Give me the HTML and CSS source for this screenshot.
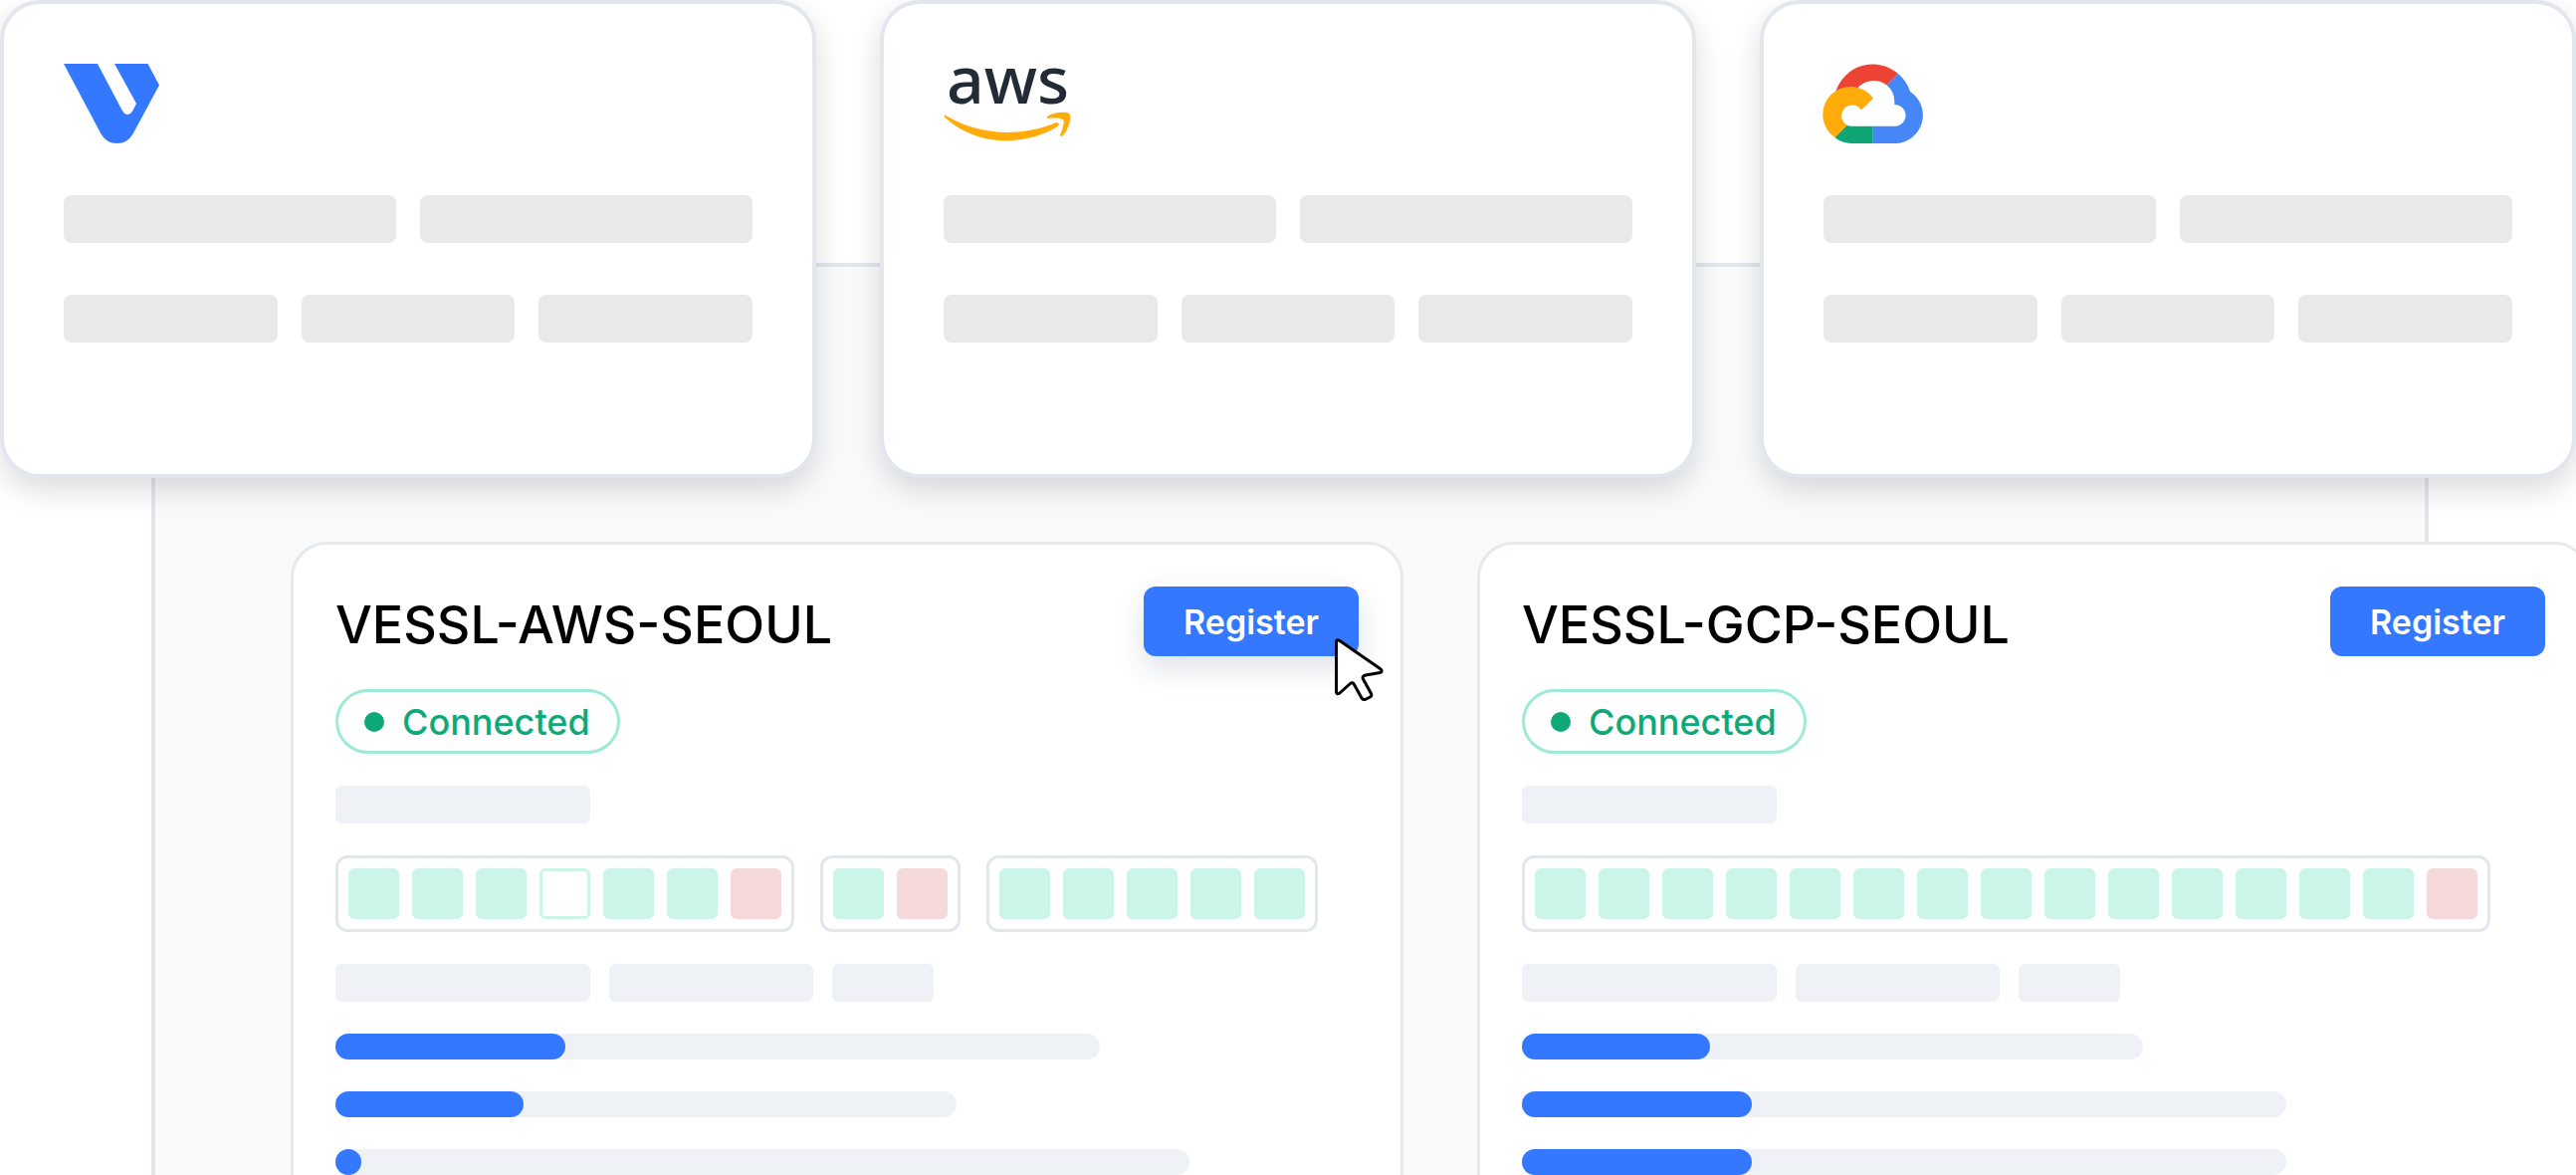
FILE: index.html
```html
<!DOCTYPE html>
<html lang="en">

<head>
    <title>VESSL Clusters</title>
    <meta charset="utf-8">
    <meta name="viewport" content="width=device-width, initial-scale=1.0">
    <link rel="stylesheet" href="styles.css">
</head>

<body>
    <div class="providers">
        <div class="provider-card">
            <svg class="logo" width="96" height="80" viewBox="0 0 96 80" role="img" aria-label="VESSL">
                <path fill="#3378FF" d="M0 0H34L58 45.500Q61 51 64 51Q67.500 51 70 46L73 40L51 0H84.500L96 21.500L69.500 70.500Q64 80 53.500 80Q43 80 37.500 70.500Z" />
            </svg>
            <div class="bar-row">
                <span class="bar"></span>
                <span class="bar"></span>
            </div>
            <div class="bar-row">
                <span class="bar"></span>
                <span class="bar"></span>
                <span class="bar"></span>
            </div>
        </div>

        <div class="provider-card">
            <svg class="logo" width="130" height="80" viewBox="0 0 130 80">
                <text class="aws-text" x="3" y="40">aws</text>
                <g fill="#FFAC0A">
                    <path d="M0.500 52.500Q1 51 3 52.500C36 72 78 74 113 59Q116 58.500 116 61Q116 62 113 64C80 83 33 83 2 54.500Q0 53 0.500 52.500Z" />
                    <path d="M104 54.500Q103 53.500 105 52.500C111 48.500 122 48 126.500 50C129 53 126 66 119.500 72.500Q117 73.500 117 71.500C119 67 121.500 59.500 120.500 57C118.500 54 109 54.500 105 55Z" />
                </g>
            </svg>
            <div class="bar-row">
                <span class="bar"></span>
                <span class="bar"></span>
            </div>
            <div class="bar-row">
                <span class="bar"></span>
                <span class="bar"></span>
                <span class="bar"></span>
            </div>
        </div>

        <div class="provider-card">
            <svg class="logo" width="100" height="80" viewBox="0 0 100 80" role="img" aria-label="Google Cloud">
                <path fill="#ED4335" d="M12.300 28A39 39 0 0 1 75 10L63.700 21.500A22 22 0 0 0 33.500 25Z" />
                <path fill="#4687F8" d="M75 10A39 39 0 0 1 87 28A28.300 28.300 0 0 1 72 80H49.700V62.800H72A10.800 10.800 0 0 0 71.300 41V38A22 22 0 0 0 63.700 21.500Z" />
                <path fill="#0FA574" d="M49.700 80H28A28 28 0 0 1 11.300 74L23.500 61.800Q25.500 62.800 28 62.800H49.700Z" />
                <path fill="#FFAC0A" d="M11.300 74A28 28 0 1 1 50 34.700L38 46.500A10.800 10.800 0 1 0 23.700 61.800Z" />
            </svg>
            <div class="bar-row">
                <span class="bar"></span>
                <span class="bar"></span>
            </div>
            <div class="bar-row">
                <span class="bar"></span>
                <span class="bar"></span>
                <span class="bar"></span>
            </div>
        </div>
    </div>

    <main class="board">
        <div class="clusters">
            <section class="cluster-card">
                <div class="cluster-header">
                    <h2 class="cluster-title">VESSL-AWS-SEOUL</h2>
                    <button type="button" class="btn-register btn-hover">
                        Register
                        <svg class="cursor" width="49" height="64" viewBox="0 0 49 64">
                            <path fill="#FFFFFF" stroke="#000000" stroke-width="3" stroke-linejoin="round" d="M1.500 4Q1.500 0.500 5 2.500L45.500 30.500Q49 33.500 45.500 34.500L31 37Q27 38 28.500 41L36.500 55.500Q37.500 58 35.500 59L30.500 61.500Q28.500 62 27 60L19.500 46.500Q18 43.500 15.500 45.500L5 55Q2 57 1.500 54Z" />
                        </svg>
                    </button>
                </div>
                <div class="status"><span class="dot"></span>Connected</div>
                <div class="skeleton-row">
                    <span class="skeleton large"></span>
                </div>
                <div class="node-row">
                    <div class="node-group">
                        <span class="node"></span>
                        <span class="node"></span>
                        <span class="node"></span>
                        <span class="node empty"></span>
                        <span class="node"></span>
                        <span class="node"></span>
                        <span class="node error"></span>
                    </div>
                    <div class="node-group">
                        <span class="node"></span>
                        <span class="node error"></span>
                    </div>
                    <div class="node-group">
                        <span class="node"></span>
                        <span class="node"></span>
                        <span class="node"></span>
                        <span class="node"></span>
                        <span class="node"></span>
                    </div>
                </div>
                <div class="skeleton-row">
                    <span class="skeleton large"></span>
                    <span class="skeleton medium"></span>
                    <span class="skeleton small"></span>
                </div>
                <div class="usage">
                    <div class="track" style="width: 74.7%"><div class="fill" style="width: 30.1%"></div></div>
                    <div class="track" style="width: 60.7%"><div class="fill" style="width: 30.3%"></div></div>
                    <div class="track" style="width: 83.5%"><div class="fill" style="width: 3%"></div></div>
                </div>
            </section>

            <section class="cluster-card">
                <div class="cluster-header">
                    <h2 class="cluster-title">VESSL-GCP-SEOUL</h2>
                    <button type="button" class="btn-register">Register</button>
                </div>
                <div class="status"><span class="dot"></span>Connected</div>
                <div class="skeleton-row">
                    <span class="skeleton large"></span>
                </div>
                <div class="node-row">
                    <div class="node-group">
                        <span class="node"></span>
                        <span class="node"></span>
                        <span class="node"></span>
                        <span class="node"></span>
                        <span class="node"></span>
                        <span class="node"></span>
                        <span class="node"></span>
                        <span class="node"></span>
                        <span class="node"></span>
                        <span class="node"></span>
                        <span class="node"></span>
                        <span class="node"></span>
                        <span class="node"></span>
                        <span class="node"></span>
                        <span class="node error"></span>
                    </div>
                </div>
                <div class="skeleton-row">
                    <span class="skeleton large"></span>
                    <span class="skeleton medium"></span>
                    <span class="skeleton small"></span>
                </div>
                <div class="usage">
                    <div class="track" style="width: 60.7%"><div class="fill" style="width: 30.3%"></div></div>
                    <div class="track" style="width: 74.7%"><div class="fill" style="width: 30.1%"></div></div>
                    <div class="track" style="width: 74.7%"><div class="fill" style="width: 30.1%"></div></div>
                </div>
            </section>
        </div>
    </main>
</body>

</html>
```

FILE: styles.css
```css
* {
    box-sizing: border-box;
}

body {
    display: flex;
    flex-direction: column;
    height: 100vh;
    margin: 0;
    overflow: hidden;
    background: #FFFFFF;
    font-family: 'Inter', sans-serif;
}

/* Provider cards */
.providers {
    position: relative;
    z-index: 1;
    display: grid;
    grid-template-columns: repeat(3, 1fr);
    gap: 64px;
}

.provider-card {
    padding: 60px 60px 132px;
    background: #FFFFFF;
    border: 4px solid #E2E7EE;
    border-radius: 40px;
    box-shadow: 0 12px 30px rgba(0, 0, 0, 0.14);
}

.logo {
    display: block;
    overflow: visible;
}

.aws-text {
    font-family: 'Noto Sans', sans-serif;
    font-size: 66px;
    font-weight: 500;
    fill: #232B37;
}

.bar-row {
    display: flex;
    gap: 24px;
    margin-top: 52px;
}

.bar {
    flex: 1;
    height: 48px;
    background: #E9E9E9;
    border-radius: 8px;
}

/* Board behind the provider cards */
.board {
    flex: 1;
    min-height: 0;
    margin: -216px 148px 0 152px;
    padding: 276px 0 0 136px;
    background: #F8FAFC;
    border: 4px solid #E2E7EE;
    border-bottom: none;
}

.clusters {
    display: grid;
    grid-template-columns: 1fr 1fr;
    gap: 74px;
    margin-right: -166px;
}

.cluster-card {
    padding: 42px 42px 80px;
    background: #FFFFFF;
    border: 3px solid #E8E9EA;
    border-radius: 36px;
}

.cluster-header {
    display: flex;
    align-items: flex-start;
    justify-content: space-between;
}

.cluster-title {
    margin: 6px 0 0;
    font-size: 52px;
    line-height: 66px;
    font-weight: 500;
    color: #000000;
}

.btn-register {
    position: relative;
    height: 70px;
    padding: 0 40px;
    background: #3378FF;
    border: none;
    border-radius: 12px;
    font-family: inherit;
    font-size: 34px;
    font-weight: 600;
    color: #FFFFFF;
    cursor: pointer;
}

.btn-hover {
    box-shadow: 0 12px 30px rgba(23, 43, 77, 0.14);
}

.cursor {
    position: absolute;
    right: -25px;
    bottom: -46px;
}

.status {
    display: flex;
    align-items: center;
    gap: 18px;
    width: fit-content;
    height: 65px;
    margin-top: 31px;
    padding: 0 27px 0 26px;
    border: 3px solid #9DEBD6;
    border-radius: 33px;
    font-size: 36px;
    font-weight: 500;
    color: #0FA878;
}

.dot {
    width: 20px;
    height: 20px;
    background: #0FA878;
    border-radius: 50%;
}

.skeleton-row {
    display: flex;
    gap: 19px;
    margin-top: 32px;
}

.skeleton {
    height: 38px;
    background: #EEF1F6;
    border-radius: 6px;
}

.skeleton.large {
    width: 256px;
}

.skeleton.medium {
    width: 205px;
}

.skeleton.small {
    width: 102px;
}

/* Node grid */
.node-row {
    display: flex;
    gap: 26px;
    margin-top: 32px;
}

.node-group {
    display: flex;
    gap: 13px;
    padding: 10px;
    border: 3px solid #E2E7EE;
    border-radius: 12px;
}

.node {
    width: 51px;
    height: 51px;
    background: #CCF5EA;
    border-radius: 6px;
}

.node.empty {
    background: #FFFFFF;
    border: 3px solid #CCF5EA;
}

.node.error {
    background: #F5D9DA;
}

/* Usage bars */
.usage {
    display: flex;
    flex-direction: column;
    gap: 32px;
    margin-top: 32px;
}

.track {
    height: 26px;
    background: #EEF1F6;
    border-radius: 13px;
}

.fill {
    height: 100%;
    background: #3378FF;
    border-radius: 13px;
}
```
